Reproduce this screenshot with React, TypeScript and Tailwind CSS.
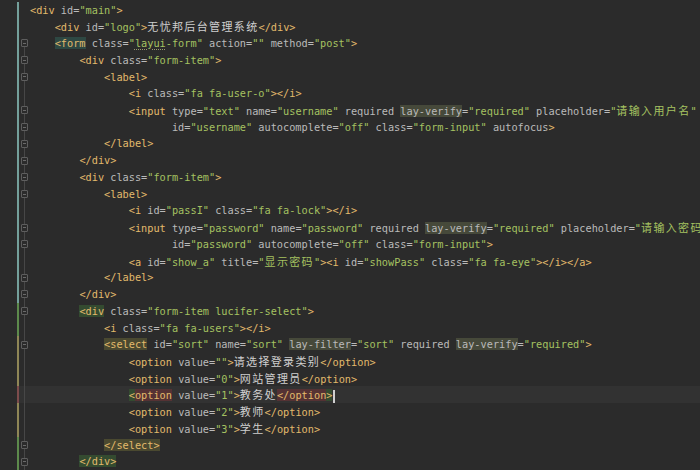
import React from "react";

// token colours (Darcula-ish)
const TAG = "text-[#e2ba6c]";
const ATTR = "text-[#bababa]";
const VAL = "text-[#a5c261]";
const TXT = "text-[#cfcfcf]";

const BG_TEAL = "bg-[#2e4843]";
const BG_GREEN = "bg-[#344b30]";
const BG_OLIVE = "bg-[#4a4930]";
const BG_ATTR = "bg-[#46493a]";
const BG_RED = "bg-[#553234]";

const G_TEAL = "bg-[#74a09b]";
const G_GREEN = "bg-[#5d8a4c]";
const G_YELLOW = "bg-[#8f8656]";
const G_RED = "bg-[#7d4c4c]";

type Hl = { find: string; nth?: number; bg?: string; u?: boolean };
type Line = {
  text: string;
  inTag?: boolean;
  hl?: Hl[];
  gut: string;
  fold?: boolean;
  current?: boolean;
  caret?: boolean;
};

const LV: Hl = { find: "lay-verify", bg: BG_ATTR };

const lines: Line[] = [
  { text: `<div id="main">`, gut: G_TEAL },
  { text: `    <div id="logo">无忧邦后台管理系统</div>`, gut: G_TEAL },
  {
    text: `    <form class="layui-form" action="" method="post">`,
    gut: G_TEAL,
    fold: true,
    hl: [{ find: "<form", bg: BG_TEAL }, { find: "layui", u: true }],
  },
  { text: `        <div class="form-item">`, gut: G_TEAL, fold: true },
  { text: `            <label>`, gut: G_TEAL, fold: true },
  { text: `                <i class="fa fa-user-o"></i>`, gut: G_TEAL },
  {
    text: `                <input type="text" name="username" required lay-verify="required" placeholder="请输入用户名"`,
    gut: G_TEAL,
    fold: true,
    hl: [LV],
  },
  {
    text: `                       id="username" autocomplete="off" class="form-input" autofocus>`,
    inTag: true,
    gut: G_TEAL,
    fold: true,
  },
  { text: `            </label>`, gut: G_TEAL, fold: true },
  { text: `        </div>`, gut: G_TEAL, fold: true },
  { text: `        <div class="form-item">`, gut: G_TEAL, fold: true },
  { text: `            <label>`, gut: G_TEAL, fold: true },
  { text: `                <i id="passI" class="fa fa-lock"></i>`, gut: G_TEAL },
  {
    text: `                <input type="password" name="password" required lay-verify="required" placeholder="请输入密码"`,
    gut: G_TEAL,
    fold: true,
    hl: [LV],
  },
  {
    text: `                       id="password" autocomplete="off" class="form-input">`,
    inTag: true,
    gut: G_TEAL,
    fold: true,
  },
  {
    text: `                <a id="show_a" title="显示密码"><i id="showPass" class="fa fa-eye"></i></a>`,
    gut: G_TEAL,
  },
  { text: `            </label>`, gut: G_TEAL, fold: true },
  { text: `        </div>`, gut: G_TEAL, fold: true },
  {
    text: `        <div class="form-item lucifer-select">`,
    gut: G_GREEN,
    fold: true,
    hl: [{ find: "<div", bg: BG_GREEN }],
  },
  { text: `            <i class="fa fa-users"></i>`, gut: G_GREEN },
  {
    text: `            <select id="sort" name="sort" lay-filter="sort" required lay-verify="required">`,
    gut: G_YELLOW,
    fold: true,
    hl: [{ find: "<select", bg: BG_OLIVE }, { find: "lay-filter", bg: BG_ATTR }, LV],
  },
  { text: `                <option value="">请选择登录类别</option>`, gut: G_YELLOW },
  { text: `                <option value="0">网站管理员</option>`, gut: G_YELLOW },
  {
    text: `                <option value="1">教务处</option>`,
    gut: G_RED,
    current: true,
    caret: true,
    hl: [
      { find: "<", bg: BG_GREEN },
      { find: "option", bg: BG_RED },
      { find: "</option", bg: BG_RED },
      { find: ">", nth: 1, bg: BG_GREEN },
    ],
  },
  { text: `                <option value="2">教师</option>`, gut: G_YELLOW },
  { text: `                <option value="3">学生</option>`, gut: G_YELLOW },
  {
    text: `            </select>`,
    gut: G_GREEN,
    fold: true,
    hl: [{ find: "</select>", bg: BG_OLIVE }],
  },
  {
    text: `        </div>`,
    gut: G_GREEN,
    fold: true,
    hl: [{ find: "</div>", bg: BG_GREEN }],
  },
];

function colours(src: string, startInTag: boolean) {
  const col: string[] = [];
  let inTag = startInTag;
  let i = 0;
  while (i < src.length) {
    const ch = src[i];
    if (!inTag && ch === "<") {
      let j = i + 1;
      if (src[j] === "/") j++;
      while (j < src.length && /[a-z]/i.test(src[j])) j++;
      for (let k = i; k < j; k++) col[k] = TAG;
      inTag = true;
      i = j;
      continue;
    }
    if (inTag && ch === ">") {
      col[i] = TAG;
      inTag = false;
      i++;
      continue;
    }
    if (inTag && ch === '"') {
      const j = src.indexOf('"', i + 1);
      for (let k = i; k <= j; k++) col[k] = VAL;
      i = j + 1;
      continue;
    }
    col[i] = ch === " " ? "" : inTag ? ATTR : TXT;
    i++;
  }
  return col;
}

function findNth(src: string, s: string, nth: number) {
  let idx = -1;
  for (let n = 0; n <= nth; n++) {
    idx = src.indexOf(s, idx + 1);
    if (idx < 0) return -1;
  }
  return idx;
}

function paint(line: Line) {
  const src = line.text;
  const col = colours(src, !!line.inTag);
  const bg: string[] = [];
  const und: boolean[] = [];
  (line.hl || []).forEach((h) => {
    const at = findNth(src, h.find, h.nth || 0);
    if (at < 0) return;
    for (let k = at; k < at + h.find.length; k++) {
      if (h.bg) bg[k] = h.bg;
      if (h.u) und[k] = true;
    }
  });

  const out: React.ReactNode[] = [];
  let buf = "";
  let key = "";
  let cls = "";
  const flush = () => {
    if (buf) out.push(<span key={out.length} className={cls}>{buf}</span>);
    buf = "";
  };
  for (let k = 0; k < src.length; k++) {
    const cjk = /[\u4e00-\u9fff]/.test(src[k]);
    const c = [
      col[k] || "",
      bg[k] || "",
      und[k] ? "underline decoration-dotted decoration-[#9a9a70] underline-offset-2" : "",
      cjk ? "font-['Noto_Sans_CJK_SC',sans-serif] text-[11px] tracking-[1.36px]" : "",
    ].join(" ");
    const kk = c;
    if (kk !== key) {
      flush();
      key = kk;
      cls = c;
    }
    buf += src[k];
  }
  flush();
  return out;
}

function Fold({ marker, first }: { marker: boolean; first: boolean }) {
  if (!marker) return <div className="w-px flex-1 bg-[#474747]" />;
  return (
    <>
      <div className={`w-px flex-1 ${first ? "" : "bg-[#474747]"}`} />
      <div className="flex h-[8px] w-[7px] items-center justify-center rounded-[1px] border border-[#5e5e5e] bg-[#2b2b2b]">
        <div className="h-px w-[3px] bg-[#6a6a6a]" />
      </div>
      <div className="w-px flex-1 bg-[#474747]" />
    </>
  );
}

export default function App() {
  return (
    <div className="h-[470px] w-[700px] overflow-hidden bg-[#2b2b2b] pt-[1.6px] font-['DejaVu_Sans_Mono',monospace] text-[10.25px] leading-[16.74px]">
      {lines.map((line, idx) => (
        <div
          key={idx}
          className={`flex h-[16.74px] ${line.current ? "bg-[#323232]" : ""}`}
        >
          <div className="flex w-[30px] shrink-0">
            <div className="w-[17px] bg-[#2b2b2b]" />
            <div className={`w-[2px] ${line.gut}`} />
            <div className="w-[2px]" />
            <div className="flex w-[7px] flex-col items-center">
              {idx >= 2 && <Fold marker={!!line.fold} first={idx === 2} />}
            </div>
            <div className="w-[2px]" />
          </div>
          <div className="whitespace-pre">
            {paint(line)}
            {line.caret && (
              <span className="ml-px inline-block h-[13px] w-[2px] bg-[#d0d0d0] align-middle" />
            )}
          </div>
        </div>
      ))}
    </div>
  );
}
